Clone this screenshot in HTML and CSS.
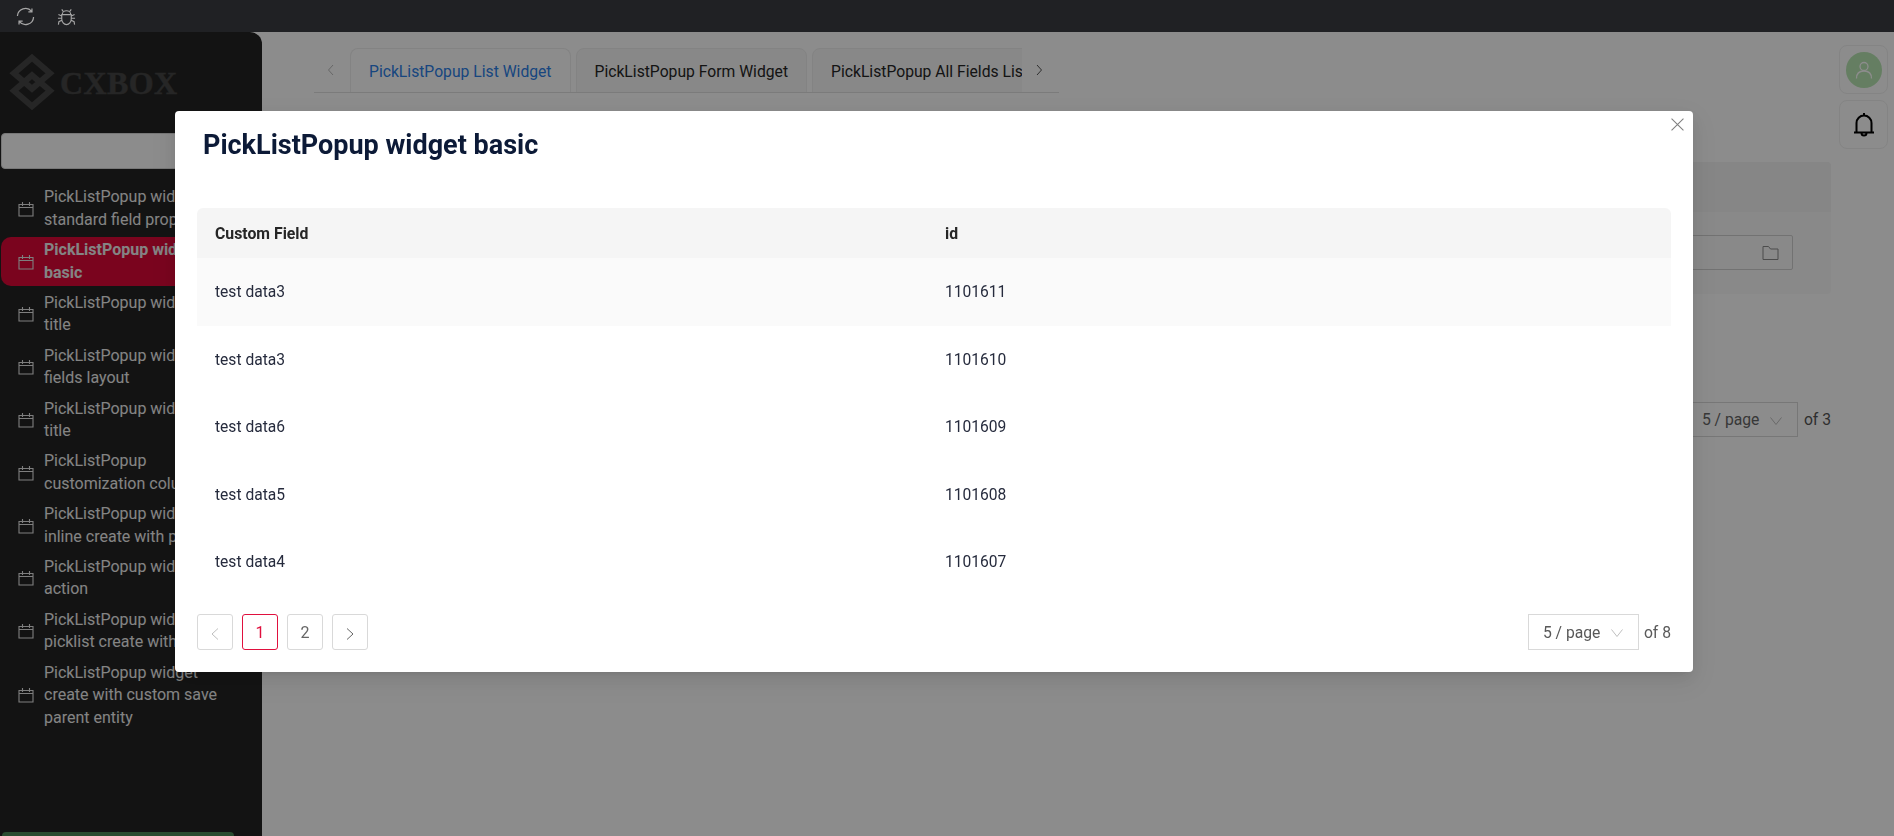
FILE: index.html
```html
<!DOCTYPE html>
<html lang="en">
<head>
<meta charset="utf-8">
<title>PickListPopup widget basic</title>
<link rel="stylesheet" href="styles.css">
</head>
<body>
<svg class="defs" aria-hidden="true">
  <symbol id="cal" viewBox="0 0 16 16"><path d="M1 3.500h14v11.500H1zM1 6.500h14M4.500 1v4M11.500 1v4" fill="none" stroke="currentColor" stroke-width="1.100"/></symbol>
</svg>
<header class="topbar">
  <svg class="top-icon" viewBox="0 0 20 20"><path d="M1.500 9.500A8.500 8.500 0 0 1 16.500 4.500M18.500 10.500A8.500 8.500 0 0 1 3.500 15.500M16.800 1.500v3.700H13M3.200 18.500v-3.700H7" fill="none" stroke="currentColor" stroke-width="1.300"/></svg>
  <svg class="top-icon" viewBox="0 0 20 20"><path d="M5.500 8a4.500 4 0 0 1 9 0zM5 8h10v4.500a5 6 0 0 1-10 0zM6.500 4.600 5 2.500M13.500 4.600 15 2.500M5 9.500 1.500 8M15 9.500l3.500-1.500M5 14l-3 1.500-.5 3M15 14l3 1.500.5 3M1 11.800h4M15 11.800h4" fill="none" stroke="currentColor" stroke-width="1.200"/></svg>
</header>
<div class="shell">
  <aside class="sidebar">
    <div class="brand">
      <svg class="brand-mark" viewBox="0 0 50 60"><path d="M25 5.700 43 21.200 25 36.700 7 21.200zM25 23.300 43 38.800 25 54.300 7 38.800z" fill="none" stroke="#464646" stroke-width="6"/></svg>
      <span class="brand-name">CXBOX</span>
    </div>
    <div class="search"></div>
    <nav class="menu">
      <a class="item"><svg class="cal"><use href="#cal"/></svg><span>PickListPopup widget standard field properties</span></a>
      <a class="item active"><svg class="cal"><use href="#cal"/></svg><span>PickListPopup widget basic</span></a>
      <a class="item"><svg class="cal"><use href="#cal"/></svg><span>PickListPopup widget title</span></a>
      <a class="item"><svg class="cal"><use href="#cal"/></svg><span>PickListPopup widget fields layout</span></a>
      <a class="item"><svg class="cal"><use href="#cal"/></svg><span>PickListPopup widget title</span></a>
      <a class="item"><svg class="cal"><use href="#cal"/></svg><span>PickListPopup customization column</span></a>
      <a class="item"><svg class="cal"><use href="#cal"/></svg><span>PickListPopup widget inline create with popup</span></a>
      <a class="item"><svg class="cal"><use href="#cal"/></svg><span>PickListPopup widget action</span></a>
      <a class="item"><svg class="cal"><use href="#cal"/></svg><span>PickListPopup widget picklist create with it</span></a>
      <a class="item"><svg class="cal"><use href="#cal"/></svg><span>PickListPopup widget create with custom save parent entity</span></a>
    </nav>
    <div class="side-action"></div>
  </aside>
  <main class="main">
    <div class="tabs">
      <svg class="tab-arrow faint" viewBox="0 0 10 14"><path d="M7 2 2.500 7 7 12" fill="none" stroke="currentColor"/></svg>
      <div class="tab-list">
        <div class="tab current">PickListPopup List Widget</div>
        <div class="tab">PickListPopup Form Widget</div>
        <div class="tab">PickListPopup All Fields List Widget</div>
      </div>
      <svg class="tab-arrow" viewBox="0 0 10 14"><path d="M3 2 7.500 7 3 12" fill="none" stroke="currentColor"/></svg>
    </div>
    <section class="widget">
      <div class="widget-head"></div>
      <div class="widget-body">
        <div class="field">
          <svg class="folder" viewBox="0 0 16 14"><path d="M.5 .5H6L8 3H15.500V13.500H.5z" fill="none" stroke="currentColor"/></svg>
        </div>
      </div>
    </section>
    <div class="under-pager">
      <div class="under-select"><span>5 / page</span><svg class="chev" viewBox="0 0 12 8"><path d="M.5 .5 6 7.500 11.500 .5" fill="none" stroke="currentColor"/></svg></div>
      <span>of 3</span>
    </div>
    <div class="float-btns">
      <div class="float-btn"><span class="avatar"><svg viewBox="0 0 20 20"><circle cx="10" cy="6.500" r="4" fill="none" stroke="currentColor" stroke-width="1.300"/><path d="M2.500 18.500c0-5 3-7.500 7.500-7.500s7.500 2.500 7.500 7.500" fill="none" stroke="currentColor" stroke-width="1.300"/></svg></span></div>
      <div class="float-btn"><svg class="bell" viewBox="0 0 22 26"><path d="M11 1v2.500M3.500 20V11a7.500 7.500 0 0 1 15 0v9M1 20.500h20M8.500 21a2.500 2.500 0 0 0 5 0" fill="none" stroke="#000" stroke-width="2"/></svg></div>
    </div>
  </main>
</div>
<div class="mask">
  <div class="modal">
    <svg class="close" viewBox="0 0 12 12"><path d="M.5 .5 11.500 11.500M11.500 .5 .5 11.500" fill="none" stroke="currentColor"/></svg>
    <h1 class="modal-title">PickListPopup widget basic</h1>
    <div class="table">
      <div class="row head"><div>Custom Field</div><div>id</div></div>
      <div class="row hover"><div>test data3</div><div>1101611</div></div>
      <div class="row"><div>test data3</div><div>1101610</div></div>
      <div class="row"><div>test data6</div><div>1101609</div></div>
      <div class="row"><div>test data5</div><div>1101608</div></div>
      <div class="row"><div>test data4</div><div>1101607</div></div>
    </div>
    <div class="pager">
      <div class="pages">
        <div class="page off"><svg viewBox="0 0 10 14"><path d="M8 1.500 2 7 8 12.500" fill="none" stroke="currentColor"/></svg></div>
        <div class="page on">1</div>
        <div class="page">2</div>
        <div class="page"><svg viewBox="0 0 10 14"><path d="M2 1.500 8 7 2 12.500" fill="none" stroke="currentColor"/></svg></div>
      </div>
      <div class="size">
        <div class="size-select"><span>5 / page</span><svg class="chev" viewBox="0 0 12 8"><path d="M.5 .5 6 7.500 11.500 .5" fill="none" stroke="currentColor"/></svg></div>
        <span>of 8</span>
      </div>
    </div>
  </div>
</div>
</body>
</html>
```

FILE: styles.css
```css
* { box-sizing: border-box; }
html, body { margin: 0; height: 100%; overflow: hidden; }
body { font-family: Roboto, "Liberation Sans", sans-serif; font-size: 15.700px; background: #fff; color: #262b3d; }
.defs { display: none; }

.topbar { height: 32px; background: #202124; display: flex; align-items: center; gap: 22px; padding-left: 16px; color: #a6a6a6; }
.top-icon { width: 19px; height: 19px; }

.shell { display: flex; height: 804px; }
.sidebar { width: 262px; flex: none; background: #242424; border-top-right-radius: 12px; display: flex; flex-direction: column; color: #f0f0f0; overflow: hidden; }
.brand { height: 101px; padding: 20px 0 0 7px; display: flex; align-items: flex-start; gap: 3px; }
.brand-mark { width: 50px; height: 60px; flex: none; }
.brand-name { font-family: "Liberation Serif", serif; font-weight: 700; font-size: 32px; line-height: 36px; margin-top: 13px; color: #464646; -webkit-text-stroke: .5px #464646; letter-spacing: .4px; }
.search { height: 36px; margin: 0 2px 0 1px; background: #fff; border: 1px solid #d9d9d9; border-radius: 4px; flex: none; }
.menu { margin-top: 15.400px; display: flex; flex-direction: column; gap: 4px; flex: 1; }
.item { display: flex; align-items: center; gap: 10px; margin-left: 1px; margin-right: 2px; padding: 2px 36px 2px 17px; line-height: 22.400px; border-radius: 10px; font-size: 16px; }
.item.active { background: #de0938; font-weight: 700; }
.cal { width: 16px; height: 16px; flex: none; color: #e6e6e6; }
.side-action { height: 4px; margin: 0 28px 0 2px; background: #4d8a58; border-radius: 10px 10px 0 0; flex: none; }

.main { flex: 1; position: relative; padding: 16px 63px 0 52px; min-width: 0; }
.tabs { width: 745px; height: 45px; display: flex; align-items: center; border-bottom: 1px solid #e0e0e0; }
.tab-arrow { width: 10px; height: 14px; color: #555; flex: none; }
.tab-arrow.faint { color: #bbb; margin: 0 12px 0 12px; }
.tab-arrow:last-child { margin: 0 15px 0 12px; }
.tab-list { display: flex; flex: 1; gap: 5px; min-width: 0; overflow: hidden; align-self: stretch; margin-left: 2px; }
.tab { flex: none; height: 45px; padding: 0 18px; line-height: 45px; color: #262626; background: #f7f7f7; border: 1px solid #eee; border-radius: 8px 8px 0 0; white-space: nowrap; }
.tab.current { color: #2c80e8; background: #fff; border-bottom-color: #fff; }

.widget { margin-top: 69px; background: #fafafa; border-radius: 4px; }
.widget-head { height: 50px; background: #f4f4f4; border-radius: 4px 4px 0 0; }
.widget-body { height: 82px; padding: 23px 38px 0 0; display: flex; justify-content: flex-end; }
.field { width: 700px; height: 35px; border: 1px solid #cfcfcf; border-radius: 2px; background: #fafafa; display: flex; align-items: center; justify-content: flex-end; padding-right: 13px; color: #8a8a8a; }
.folder { width: 17px; height: 14px; }
.under-pager { margin-top: 108px; display: flex; justify-content: flex-end; align-items: center; gap: 6px; color: #555; height: 35px; }
.under-select { width: 111px; height: 35px; border: 1px solid #d9d9d9; display: flex; align-items: center; justify-content: space-between; padding: 0 15px 0 14px; color: #666; }
.chev { width: 12px; height: 8px; color: #bfbfbf; flex: none; margin-top: 2px; }

.float-btns { position: absolute; top: 13px; right: 6px; display: flex; flex-direction: column; gap: 6px; }
.float-btn { width: 49px; height: 49px; border: 1px solid #f0f0f0; border-radius: 8px; display: flex; align-items: center; justify-content: center; }
.avatar { width: 36px; height: 36px; border-radius: 50%; background: #b8e6b2; display: flex; align-items: center; justify-content: center; color: #fff; }
.avatar svg { width: 20px; height: 20px; }
.bell { width: 22px; height: 28px; }

.mask { position: fixed; inset: 32px 0 0 0; background: rgba(0, 0, 0, .45); padding: 79px 0 0 175px; }
.modal { position: relative; width: 1518px; height: 561px; background: #fff; border-radius: 4px; padding: 0 22px; box-shadow: 0 3px 6px -4px rgba(0,0,0,.12), 0 6px 16px rgba(0,0,0,.08), 0 9px 28px 8px rgba(0,0,0,.05); }
.close { position: absolute; top: 7px; right: 9px; width: 13px; height: 13px; color: #808080; }
.modal-title { margin: 0; padding: 17px 0 0 6px; height: 97px; font-size: 27px; line-height: 34px; font-weight: 700; color: #0c1a37; }
.table { height: 388px; }
.row { display: grid; grid-template-columns: 730px 1fr; height: 67.500px; align-items: center; padding-left: 18px; font-size: 15.600px; }
.row.head { height: 50.400px; background: #f5f5f5; font-weight: 700; border-radius: 6px 6px 0 0; color: #262626; font-size: 15.800px; }
.row.hover { background: #fafafa; }
.pager { display: flex; justify-content: space-between; align-items: center; margin-top: 18px; }
.pages { display: flex; gap: 9px; }
.page { width: 36px; height: 36px; border: 1px solid #d9d9d9; border-radius: 3px; display: flex; align-items: center; justify-content: center; color: #666; font-size: 16px; }
.page svg { width: 10px; height: 14px; margin-top: 4px; }
.page.off { color: #bfbfbf; }
.page.on { border-color: #e0103e; color: #e0103e; }
.size { display: flex; align-items: center; gap: 5px; color: #595959; }
.size-select { width: 111px; height: 36px; border: 1px solid #d9d9d9; display: flex; align-items: center; justify-content: space-between; padding: 0 15px 0 14px; }
```
